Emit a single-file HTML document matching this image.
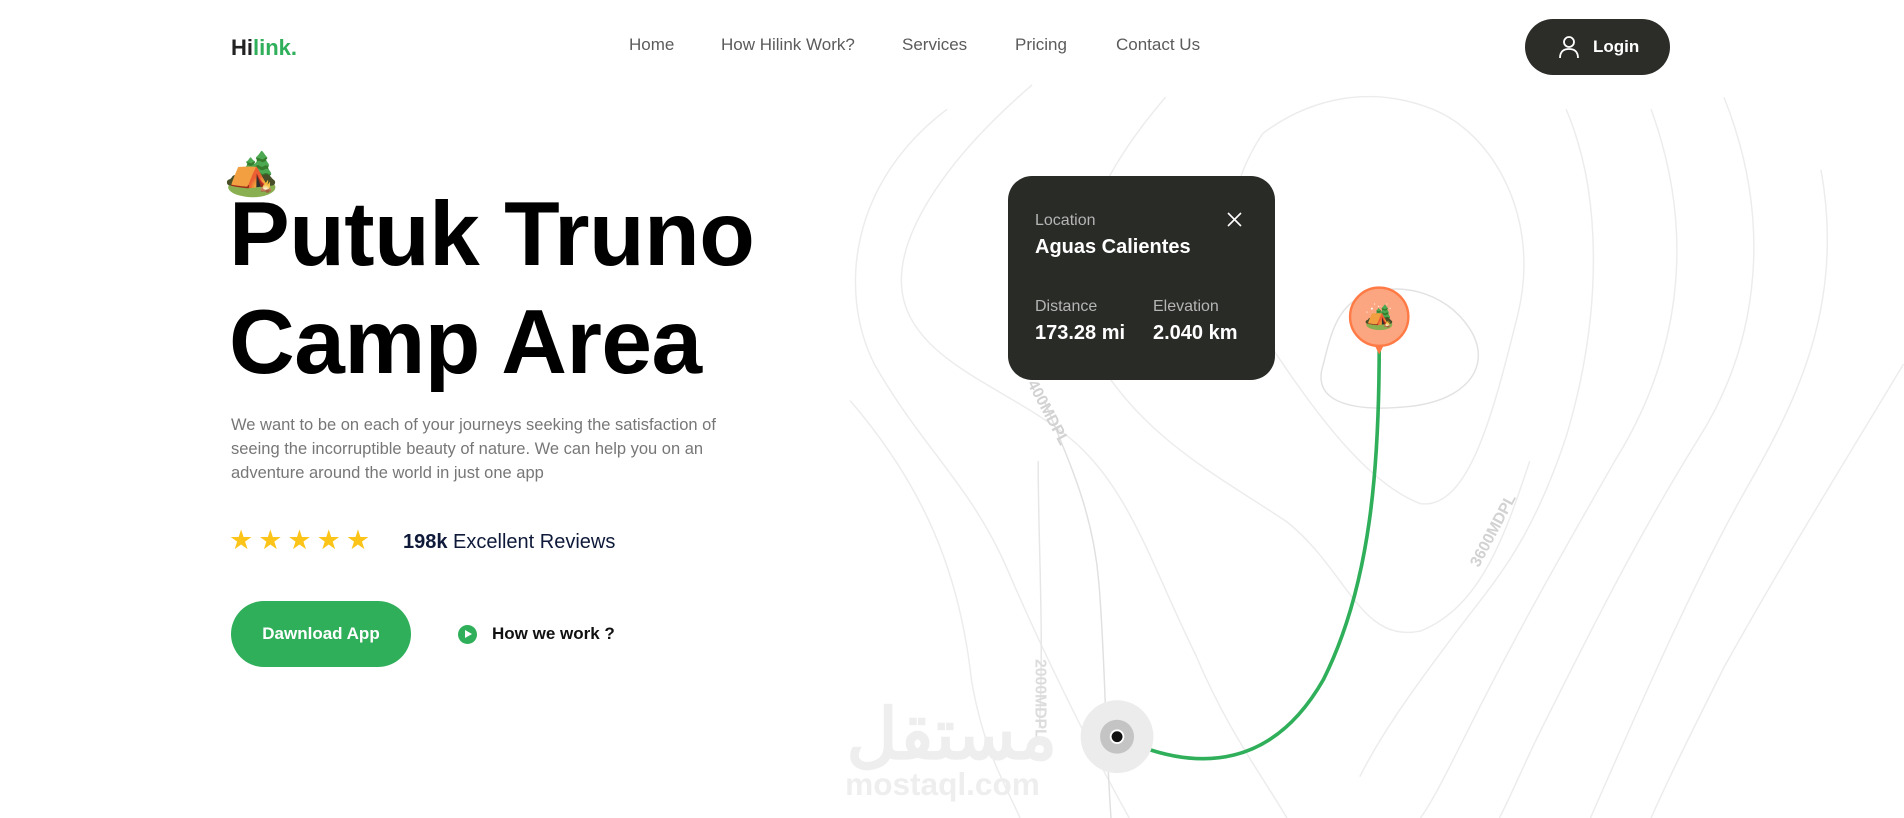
<!DOCTYPE html>
<html><head><meta charset="utf-8"><style>
*{margin:0;padding:0;box-sizing:border-box}
body{width:1904px;height:818px;overflow:hidden;background:#fff;font-family:"Liberation Sans",sans-serif;position:relative}
.a{position:absolute;white-space:nowrap}
svg.bg{position:absolute;left:0;top:0}
</style></head><body>
<svg class="bg" width="1904" height="818" viewBox="0 0 1568 674">
 <g fill="none" stroke="#ececec" stroke-width="1.2">
  <path d="M850 70 C780 130 730 200 745 250 C760 300 830 320 880 360 C930 400 950 470 985 540 C1010 600 1040 640 1060 674"/>
  <path d="M780 90 C700 150 690 240 720 300 C760 370 800 400 830 470 C860 540 900 620 930 674"/>
  <path d="M700 330 C760 400 790 470 800 560 C810 620 830 650 840 674"/>
  <path d="M960 80 C900 150 870 220 900 290 C940 360 1000 390 1060 430 C1110 470 1120 530 1170 520 C1220 500 1240 440 1260 380"/>
  <path d="M1040 110 C1000 170 1010 230 1050 290 C1090 350 1130 400 1170 415 C1210 420 1230 340 1250 260 C1270 180 1230 110 1180 90 C1130 70 1080 80 1040 110"/>
  <path d="M1090 300 C1080 330 1110 340 1160 335 C1210 330 1230 300 1210 270 C1190 240 1150 230 1120 245 C1100 255 1095 280 1090 300" stroke="#e2e2e2"/>
  <path d="M1290 90 C1320 160 1320 260 1290 360 C1260 450 1230 480 1200 520 C1170 560 1140 600 1120 640"/>
  <path d="M1360 90 C1400 200 1380 300 1330 380 C1290 450 1250 520 1210 600 C1190 640 1180 660 1170 674"/>
  <path d="M1420 80 C1460 180 1450 280 1400 360 C1350 440 1310 520 1270 600 C1255 630 1245 655 1235 674"/>
  <path d="M1500 140 C1520 250 1480 330 1440 400 C1400 470 1360 560 1310 674"/>
  <path d="M1568 300 C1520 380 1470 460 1420 550 C1395 600 1375 640 1360 674"/>
  <path d="M860 330 C880 380 900 420 905 480 C910 540 910 600 915 674" stroke="#e0e0e0"/>
  <path d="M855 380 C855 450 860 520 856 600" stroke="#e6e6e6"/>
 </g>
 <text x="0" y="0" transform="translate(846 316) rotate(62)" font-family="Liberation Sans" font-weight="bold" font-size="13" fill="#d2d2d2">400MDPL</text>
 <text x="0" y="0" transform="translate(1218 468) rotate(-62)" font-family="Liberation Sans" font-weight="bold" font-size="13" fill="#d2d2d2">3600MDPL</text>
 <text x="0" y="0" transform="translate(853 543) rotate(90)" font-family="Liberation Sans" font-weight="bold" font-size="13" fill="#dcdcdc">2000MDPL</text>
 <text x="697" y="625" font-family="Liberation Sans,'Noto Sans CJK SC',sans-serif" font-weight="bold" font-size="58" fill="#eeeeee">مستقل</text>
 <text x="696" y="655" font-family="Liberation Sans" font-weight="bold" font-size="26" fill="#eeeeee">mostaql.com</text>
 <path d="M1136 285 C1136 380 1130 480 1090 560 C1050 630 990 640 920 607" fill="none" stroke="#30af5b" stroke-width="3"/>
 <circle cx="920" cy="607" r="30" fill="#ececec"/>
 <circle cx="920" cy="607" r="14" fill="#c4c4c4"/>
 <circle cx="920" cy="607" r="6" fill="#fff"/>
 <circle cx="920" cy="607" r="4.5" fill="#111"/>
 <path d="M1131 282 L1136 292 L1141 282Z" fill="#ff7a45"/>
 <circle cx="1136" cy="261" r="24" fill="#fba680" stroke="#ff7a45" stroke-width="2"/>
 <text x="1136" y="268" text-anchor="middle" font-size="20">🏕️</text>
</svg>

<div class="a" style="left:231px;top:35px;font-size:22px;font-weight:bold;color:#222">Hi<span style="color:#30af5b">link.</span></div>
<div class="a" style="left:629px;top:35px;font-size:17px;color:#5b5b5b">Home</div>
<div class="a" style="left:721px;top:35px;font-size:17px;color:#5b5b5b">How Hilink Work?</div>
<div class="a" style="left:902px;top:35px;font-size:17px;color:#5b5b5b">Services</div>
<div class="a" style="left:1015px;top:35px;font-size:17px;color:#5b5b5b">Pricing</div>
<div class="a" style="left:1116px;top:35px;font-size:17px;color:#5b5b5b">Contact Us</div>
<div class="a" style="left:1525px;top:19px;width:145px;height:56px;border-radius:28px;background:#2c2d28;color:#fff;font-weight:bold;font-size:17px;line-height:56px;padding-left:68px">
 <svg style="position:absolute;left:33px;top:16px" width="22" height="24" viewBox="0 0 22 24" fill="none" stroke="#fff" stroke-width="1.8"><circle cx="11" cy="7" r="5"/><path d="M2 23 C2 16 6 14 11 14 C16 14 20 16 20 23"/></svg>Login</div>

<div class="a" style="left:224px;top:146px;font-size:44px;line-height:56px">🏕️</div>
<div class="a" style="left:229px;top:181px;font-size:91px;font-weight:bold;color:#000;line-height:108px;letter-spacing:-0.5px">Putuk Truno<br>Camp Area</div>
<div class="a" style="left:231px;top:413px;font-size:16.5px;line-height:24px;color:#777">We want to be on each of your journeys seeking the satisfaction of<br>seeing the incorruptible beauty of nature. We can help you on an<br>adventure around the world in just one app</div>
<div class="a" style="left:229px;top:525px;font-size:27px;color:#fcc419;letter-spacing:5px">★★★★★</div>
<div class="a" style="left:403px;top:531px;font-size:20px;color:#0f1a3a"><b>198k</b> Excellent Reviews</div>
<div class="a" style="left:231px;top:601px;width:180px;height:66px;border-radius:33px;background:#30af5b;color:#fff;font-weight:bold;font-size:17px;line-height:66px;text-align:center">Dawnload App</div>
<div class="a" style="left:458px;top:625px;width:19px;height:19px;border-radius:50%;background:#30af5b"><div style="position:absolute;left:7px;top:5px;width:0;height:0;border-left:7px solid #fff;border-top:4.5px solid transparent;border-bottom:4.5px solid transparent"></div></div>
<div class="a" style="left:492px;top:624px;font-size:17px;font-weight:bold;color:#111">How we work ?</div>

<div class="a" style="left:1008px;top:176px;width:267px;height:204px;border-radius:24px;background:#292b27;color:#fff">
 <div class="a" style="left:27px;top:36px;font-size:16px;color:#b5b5b5">Location</div>
 <div class="a" style="left:27px;top:60px;font-size:20px;font-weight:bold">Aguas Calientes</div>
 <svg class="a" style="left:219px;top:36px" width="15" height="15" viewBox="0 0 15 15" stroke="#fff" stroke-width="1.6"><path d="M1 1L14 14M14 1L1 14"/></svg>
 <div class="a" style="left:27px;top:122px;font-size:16px;color:#b5b5b5">Distance</div>
 <div class="a" style="left:27px;top:146px;font-size:20px;font-weight:bold">173.28 mi</div>
 <div class="a" style="left:145px;top:122px;font-size:16px;color:#b5b5b5">Elevation</div>
 <div class="a" style="left:145px;top:146px;font-size:20px;font-weight:bold">2.040 km</div>
</div>
</body></html>
